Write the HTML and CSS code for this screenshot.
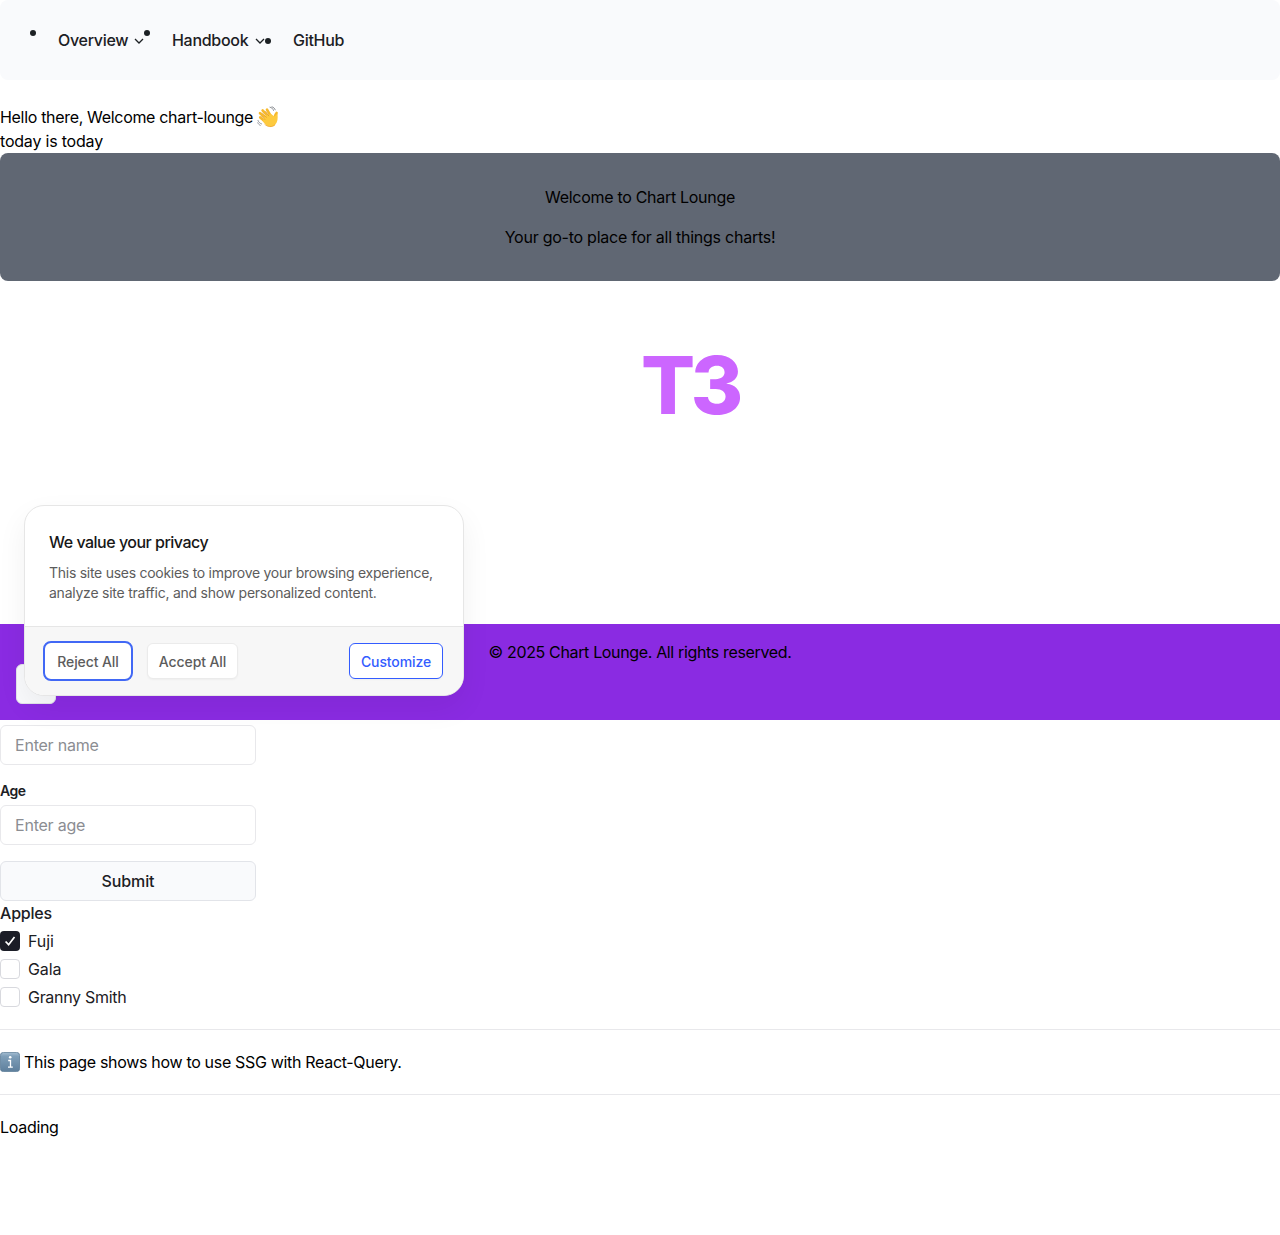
FILE: index.html
```html
<!DOCTYPE html>
<html lang="en">
<head>
<meta charset="utf-8">
<title>Chart Lounge</title>
<link rel="stylesheet" href="styles.css">
</head>
<body>
<nav class="nav">
  <ul class="nav-list">
    <li class="nav-item raised w-overview"><span>Overview</span><svg class="chev" viewBox="0 0 10 6"><path d="M1 1l4 4 4-4"/></svg></li>
    <li class="nav-item raised w-handbook"><span>Handbook</span><svg class="chev" viewBox="0 0 10 6"><path d="M1 1l4 4 4-4"/></svg></li>
    <li class="nav-item"><span>GitHub</span></li>
  </ul>
</nav>
<main>
  <section class="greeting">
    <p><span class="t-hello">Hello there, Welcome chart-lounge</span><svg class="wave" viewBox="0 0 22 22">
      <g fill="none" stroke="#8f9297" stroke-width="1" stroke-linecap="round"><path d="M13 1.2c1.8.4 3 1.500 3.500 3.200M15 .8c1.700.5 2.700 1.600 3.200 3M1 14.500c.6 1.600 1.800 2.800 3.500 3.400M.8 16.800c.5 1.200 1.300 2 2.400 2.500"/></g>
      <g fill="none" stroke="#f6b92c" stroke-width="2.600" stroke-linecap="round"><path d="M10 17L3.200 11.400M10 13L3 7.200M12 11.500L5.600 4.400M14 10.500L10 3.600"/><path d="M18 14c-.5-2.500 0-5 1.600-7"/></g>
      <path d="M8 10l6-2 3.500 2.500 3-3c.5 5 .2 8.500-2.300 11.300-2.500 2.600-6.500 2.700-9.500-.3l-3-3z" fill="#fdca3e"/>
      <path d="M8.200 13.800L4.300 9.900M9.600 11.600L5 6.600M12 10.200L8.300 4.900" stroke="#d98a20" stroke-width=".6" fill="none"/>
      <path d="M7.500 18c3 3.200 7.500 3.400 10.500.8" stroke="#eda22b" stroke-width=".8" fill="none"/>
    </svg></p>
    <p class="t-today">today is today</p>
  </section>
  <section class="banner">
    <p>Welcome to Chart Lounge</p>
    <p class="t-goto">Your go-to place for all things charts!</p>
  </section>
  <section class="hero"><h1>T3</h1></section>
</main>
<footer class="footer">
  <p class="t-copy">© 2025 Chart Lounge. All rights reserved.</p>
  <button class="corner" aria-label="Theme"></button>
</footer>
<form class="form">
  <input class="field" placeholder="Enter name">
  <label class="label" for="age">Age</label>
  <input class="field" id="age" placeholder="Enter age">
  <button class="submit" type="button">Submit</button>
</form>
<section class="apples">
  <p class="apples-title">Apples</p>
  <div class="check"><span class="box on"><svg viewBox="0 0 20 20"><path d="M5.600 10.500l3 3.200 5.900-7.700"/></svg></span><span class="t-short">Fuji</span></div>
  <div class="check"><span class="box"></span><span class="t-short">Gala</span></div>
  <div class="check"><span class="box"></span><span>Granny Smith</span></div>
</section>
<section class="info">
  <svg class="info-icon" viewBox="0 0 20 20"><defs><linearGradient id="blue" x2="0" y2="1"><stop stop-color="#a5bed2"/><stop offset=".2" stop-color="#7f9fb9"/><stop offset="1" stop-color="#5e7f9c"/></linearGradient></defs><rect x=".4" y=".4" width="19.200" height="19.200" rx="3" fill="url(#blue)" stroke="#587a96" stroke-width=".8"/><circle cx="10.200" cy="5.300" r="1.300" fill="#fff"/><path d="M8.200 8.500h2.300v6.500M8 15.200h4.800" fill="none" stroke="#fff" stroke-width="1.300"/></svg>
  <span class="t-info">This page shows how to use SSG with React-Query.</span>
</section>
<p class="loading">Loading</p>
<aside class="consent">
  <div class="consent-body">
    <h2>We value your privacy</h2>
    <p><span class="t-line1">This site uses cookies to improve your browsing experience,</span><br><span class="t-line2">analyze site traffic, and show personalized content.</span></p>
  </div>
  <div class="consent-actions">
    <button class="btn reject">Reject All</button>
    <button class="btn accept">Accept All</button>
    <button class="btn customize">Customize</button>
  </div>
</aside>
</body>
</html>
```
FILE: styles.css
```css
* { box-sizing: border-box; margin: 0; padding: 0; }
body { font: 16px/24px Inter, sans-serif; color: #000; background: #fff; letter-spacing: -.3px; min-height: 1235px; position: relative; overflow-x: hidden; }
button, input { font: inherit; letter-spacing: inherit; }
.nav { height: 80px; background: #f9fafc; border-radius: 8px; padding: 28px 0 0 58px; color: #1c2024; font-weight: 500; }
.nav-list { display: flex; list-style: none; }
.nav-item { position: relative; display: flex; align-items: center; gap: 6px; }
.nav-item::before { content: ""; position: absolute; left: -28px; top: 10px; width: 6px; height: 6px; border-radius: 50%; background: #1c2024; }
.raised::before { top: 2px; }
.w-overview { width: 114px; }
.w-handbook { width: 121px; gap: 7px; }
.chev { width: 10px; height: 6px; margin-top: 1px; fill: none; stroke: #1c2024; stroke-width: 1.3; }
.greeting { padding-top: 25px; }
.greeting p { height: 24px; display: flex; align-items: center; gap: 4px; }
.t-hello { letter-spacing: -.32px; }
.greeting .t-today { letter-spacing: -.2px; }
.wave { width: 22px; height: 22px; }
.banner { height: 128px; background: #606773; border-radius: 8px; text-align: center; display: flex; flex-direction: column; gap: 16px; padding-top: 32px; }
.t-goto { letter-spacing: -.25px; }
.hero { height: 343px; padding: 64px 0 0 641px; }
.hero h1 { font-size: 80px; line-height: 80px; font-weight: 800; letter-spacing: -4.5px; color: #cc66ff; }
.footer { position: relative; height: 96px; background: #8a2be2; padding-top: 16px; text-align: center; }
.t-copy { letter-spacing: -.35px; }
.corner { position: absolute; left: 16px; top: 40px; width: 40px; height: 40px; border: 1px solid #e2e4e9; border-radius: 6px; background: #f9fafc; }
.form { width: 256px; padding-top: 5px; display: flex; flex-direction: column; color: #1c2024; }
.field { height: 40px; border: 1px solid #e8e8eb; border-radius: 6px; padding: 0 14px; background: #fff; letter-spacing: -.22px; }
.field::placeholder { color: #8b8d92; opacity: 1; }
.label { font-size: 14px; font-weight: 600; line-height: 20px; margin: 16px 0 4px; letter-spacing: -.5px; }
.submit { height: 40px; margin-top: 16px; background: #f9fafc; border: 1px solid #e2e4e9; border-radius: 6px; font-weight: 500; color: #1c2024; letter-spacing: -.1px; }
.apples { color: #1c2024; height: 128px; }
.apples-title { font-weight: 500; margin-bottom: 4px; letter-spacing: -.2px; }
.check { display: flex; align-items: center; gap: 8px; height: 24px; margin-bottom: 4px; }
.t-short { letter-spacing: -.1px; }
.box { width: 20px; height: 20px; border: 1px solid #d8d9de; border-radius: 4px; background: #fff; }
.on { background: #1b1d27; border: 0; }
.on svg { display: block; fill: none; stroke: #fff; stroke-width: 1.700; }
.info { height: 66px; border-top: 1px solid #e8e8eb; border-bottom: 1px solid #e8e8eb; display: flex; align-items: center; gap: 4px; }
.info-icon { width: 20px; height: 20px; }
.t-info { letter-spacing: -.32px; }
.loading { padding-top: 20px; }
.consent { position: absolute; left: 24px; top: 505px; width: 440px; height: 191px; border: 1px solid #e6e6e6; border-radius: 20px; background: #fff; box-shadow: 0 12px 30px rgba(0,0,0,.06); overflow: hidden; }
.consent-body { height: 120px; padding: 24px 24px 0; }
.consent h2 { font-size: 16px; line-height: 24px; font-weight: 500; color: #171717; letter-spacing: -.5px; }
.consent-body p { margin-top: 9px; font-size: 14px; line-height: 20px; color: #5c5c5c; }
.t-line1 { letter-spacing: -.27px; }
.t-line2 { letter-spacing: -.24px; }
.consent-actions { height: 70px; border-top: 1px solid #e6e6e6; background: #f7f7f7; padding: 0 20px 2px; display: flex; align-items: center; }
.btn { height: 36px; padding-top: 2px; border: 1px solid #ebebeb; border-radius: 6px; background: #fff; color: #5c5c5c; font-size: 14px; font-weight: 500; letter-spacing: -.1px; box-shadow: 0 1px 2px rgba(0,0,0,.04); }
.reject { width: 86px; outline: 2px solid #4168f5; border-color: #fff; }
.accept { width: 91px; margin-left: 16px; }
.customize { width: 94px; margin-left: auto; border-color: #335cff; color: #335cff; }
```
